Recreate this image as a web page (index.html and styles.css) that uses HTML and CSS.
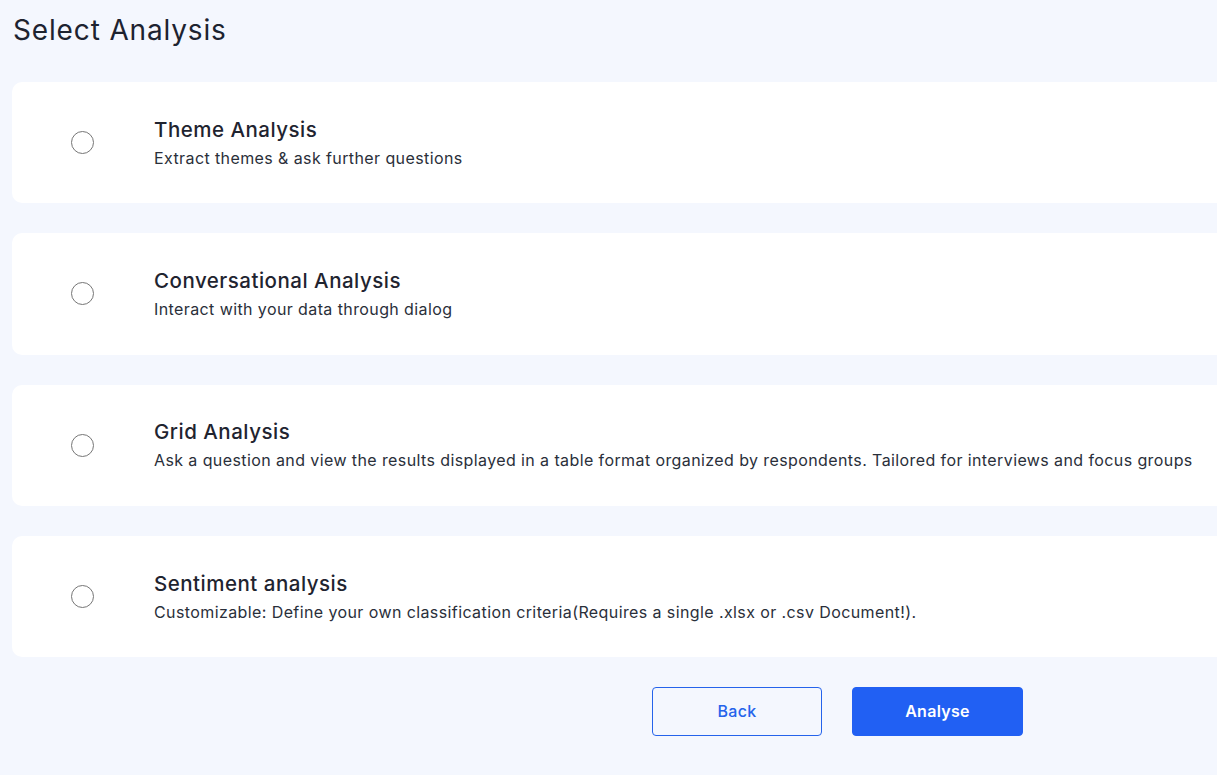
FILE: index.html
```html
<!DOCTYPE html>
<html>
<head>
<meta charset="utf-8">
<link rel="stylesheet" href="styles.css">
</head>
<body>
<div class="page">
  <h1 class="heading">Select Analysis</h1>
  <div class="list">
    <label class="card">
      <span class="radio-wrap"><span class="radio"></span></span>
      <span class="text">
        <span class="title">Theme Analysis</span>
        <span class="desc">Extract themes &amp; ask further questions</span>
      </span>
    </label>
    <label class="card">
      <span class="radio-wrap"><span class="radio"></span></span>
      <span class="text">
        <span class="title">Conversational Analysis</span>
        <span class="desc">Interact with your data through dialog</span>
      </span>
    </label>
    <label class="card">
      <span class="radio-wrap"><span class="radio"></span></span>
      <span class="text">
        <span class="title">Grid Analysis</span>
        <span class="desc">Ask a question and view the results displayed in a table format organized by respondents. Tailored for interviews and focus groups</span>
      </span>
    </label>
    <label class="card">
      <span class="radio-wrap"><span class="radio"></span></span>
      <span class="text">
        <span class="title">Sentiment analysis</span>
        <span class="desc">Customizable: Define your own classification criteria(Requires a single .xlsx or .csv Document!).</span>
      </span>
    </label>
  </div>
  <div class="actions">
    <button class="btn btn-outline">Back</button>
    <button class="btn btn-primary">Analyse</button>
  </div>
</div>
</body>
</html>
```

FILE: styles.css
```css
html, body {
  margin: 0;
  padding: 0;
  background: #f4f7fe;
  overflow: hidden;
  width: 1217px;
  height: 775px;
}
body {
  font-family: "Inter", "Noto Sans", "Liberation Sans", sans-serif;
  color: #1f2430;
}
.page {
  width: 1651px;
  padding: 0 0 0 12px;
}
.heading {
  margin: 0;
  padding-top: 12px;
  padding-left: 1px;
  font-size: 28px;
  font-weight: 400;
  line-height: 36px;
  color: #1d2330;
  letter-spacing: 0.85px;
}
.list {
  margin-top: 34px;
  display: flex;
  flex-direction: column;
  gap: 30px;
}
.card {
  display: flex;
  align-items: center;
  height: 121.3px;
  background: #ffffff;
  border-radius: 10px;
}
.radio-wrap {
  width: 142px;
  display: flex;
  justify-content: center;
}
.radio {
  display: block;
  width: 23px;
  height: 23px;
  border: 1.5px solid #767676;
  border-radius: 50%;
  box-sizing: border-box;
  margin-right: 1px;
}
.text {
  display: flex;
  flex-direction: column;
  margin-top: 1px;
}
.title {
  font-size: 20.5px;
  font-weight: 500;
  line-height: 26px;
  color: #1f2430;
  letter-spacing: 0.5px;
}
.desc {
  font-size: 16px;
  line-height: 24px;
  color: #2a2f3a;
  margin-top: 3px;
  letter-spacing: 0.4px;
}
.actions {
  display: flex;
  justify-content: center;
  gap: 30px;
  margin-top: 30px;
}
.btn {
  width: 171px;
  height: 49px;
  border-radius: 4px;
  font-family: inherit;
  font-size: 16px;
  font-weight: 600;
  letter-spacing: 0.3px;
  line-height: 20px;
  padding: 0 0 2px;
  cursor: pointer;
}
.btn-outline {
  background: transparent;
  border: 1px solid #2563eb;
  color: #2563eb;
  font-weight: 500;
  width: 170px;
}
.btn-primary {
  background: #2160f3;
  border: 1px solid #2160f3;
  color: #ffffff;
}
```
